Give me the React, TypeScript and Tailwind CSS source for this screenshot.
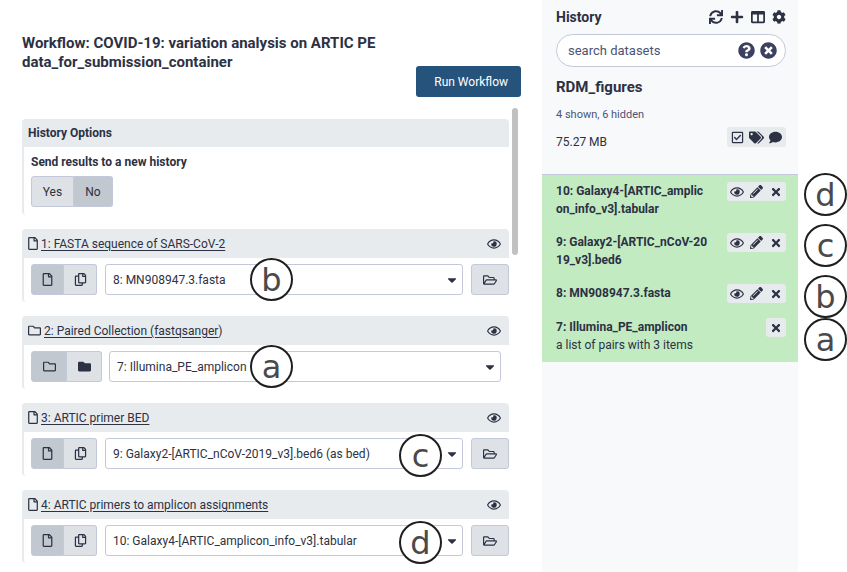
import type { ReactNode } from "react";
import {
  FaCaretDown,
  FaCog,
  FaColumns,
  FaComment,
  FaFolder,
  FaPencilAlt,
  FaPlus,
  FaQuestionCircle,
  FaRegCheckSquare,
  FaRegCopy,
  FaRegEye,
  FaRegFile,
  FaRegFolder,
  FaRegFolderOpen,
  FaSync,
  FaTags,
  FaTimes,
  FaTimesCircle,
} from "react-icons/fa";

function Marker({ letter, className = "" }: { letter: string; className?: string }) {
  return (
    <span
      className={`flex size-[43px] items-center justify-center rounded-full border-2 border-[#1f1f1f] bg-white [font-family:'DejaVu_Sans',sans-serif] text-[32px] leading-none text-[#4a4a4a] ${className}`}
    >
      {letter}
    </span>
  );
}

function Toggle({ active, label, children, className }: { active?: boolean; label: string; children: ReactNode; className: string }) {
  return (
    <button
      type="button"
      aria-label={label}
      aria-pressed={!!active}
      className={`flex h-[31px] items-center justify-center border border-[#c3c8da] first:rounded-l-[3px] last:rounded-r-[3px] last:border-l-0 ${
        active ? "bg-[#c1c8d0]" : "bg-[#dee2e6]"
      } ${className}`}
    >
      {children}
    </button>
  );
}

type Step = {
  id: string;
  title: string;
  tail?: string;
  value: string;
  collection?: boolean;
  marker: string;
  markerClass: string;
};

const steps: Step[] = [
  { id: "s1", title: "1: FASTA sequence of SARS-CoV-2", value: "8: MN908947.3.fasta", marker: "b", markerClass: "left-[145px] -top-1.5" },
  { id: "s2", title: "2: Paired Collection (fastqsanger", tail: ")", value: "7: Illumina_PE_amplicon", collection: true, marker: "a", markerClass: "left-[141px] -top-1.5" },
  { id: "s3", title: "3: ARTIC primer BED", value: "9: Galaxy2-[ARTIC_nCoV-2019_v3].bed6 (as bed)", marker: "c", markerClass: "right-[21px] -top-1" },
  { id: "s4", title: "4: ARTIC primers to amplicon assignments", value: "10: Galaxy4-[ARTIC_amplicon_info_v3].tabular", marker: "d", markerClass: "right-[21px] -top-1" },
];

function StepCard({ step }: { step: Step }) {
  const c = step.collection;
  return (
    <section className="rounded-[4px] border-l-2 border-[#e7ebee]">
      <header className="-ml-0.5 flex h-[29px] items-center justify-between rounded-t-[4px] bg-[#e7ebee] pr-2 pl-1.5">
        <div className="flex items-center gap-[3px]">
          {c ? <FaRegFolder size={13} /> : <FaRegFile className="w-2.5" size={13} />}
          <label htmlFor={step.id}>
            <span className="underline underline-offset-2">{step.title}</span>
            {step.tail}
          </label>
        </div>
        <button type="button" aria-label="Show in preview">
          <FaRegEye size={14} />
        </button>
      </header>
      <div className={`flex pt-1.5 pb-[7px] pl-[7px] ${c ? "gap-[7px] pr-2" : "gap-2"}`}>
        <div className="flex">
          <Toggle active label="Single" className={c ? "w-9" : "w-[33px]"}>
            {c ? <FaRegFolder size={13} /> : <FaRegFile size={13} />}
          </Toggle>
          <Toggle label="Multiple" className={c ? "w-[35px]" : "w-[33px]"}>
            {c ? <FaFolder size={13} /> : <FaRegCopy size={13} />}
          </Toggle>
        </div>
        <div className="relative min-w-0 flex-1">
          <select id={step.id} className="h-[31px] w-full appearance-none rounded-[3px] border border-[#c3c8da] bg-white pr-6 pl-[7px]">
            <option>{step.value}</option>
          </select>
          <FaCaretDown size={14} className="pointer-events-none absolute top-[9px] right-1" />
          <Marker letter={step.marker} className={`absolute ${step.markerClass}`} />
        </div>
        {!c && (
          <button type="button" aria-label="Browse datasets" className="flex h-[31px] w-[38px] items-center justify-center rounded-[3px] border border-[#c3c8da] bg-[#dee2e6]">
            <FaRegFolderOpen size={14} />
          </button>
        )}
      </div>
    </section>
  );
}

const datasets = [
  { name: "10: Galaxy4-[ARTIC_amplicon_info_v3].tabular", full: true },
  { name: "9: Galaxy2-[ARTIC_nCoV-2019_v3].bed6", full: true },
  { name: "8: MN908947.3.fasta", full: true },
  { name: "7: Illumina_PE_amplicon", note: "a list of pairs with 3 items", full: false },
];

export default function App() {
  return (
    <div className="flex h-screen overflow-hidden bg-white [font-family:Roboto,sans-serif] text-xs leading-[18px] text-[#2c3143]">
      <main className="flex min-w-0 flex-1 flex-col pr-[21px] pl-[22px]">
        <h1 className="mt-[34px] pr-[120px] text-[15px] leading-[19px] font-bold">
          Workflow: COVID-19: variation analysis on ARTIC PE data_for_submission_container
        </h1>
        <button type="button" className="-mt-1.5 h-[31px] shrink-0 self-end rounded-[3px] bg-[#25537b] pr-[13px] pl-[18px] text-white">
          Run Workflow
        </button>
        <div className="mt-[11px] flex min-h-0 flex-1 gap-[3px] overflow-hidden pr-[3px]">
          <div className="flex min-w-0 flex-1 flex-col gap-3.5 pt-[11px]">
            <section className="rounded-[4px] border-l-2 border-[#e7ebee]">
              <h2 className="-ml-0.5 flex h-7 items-center rounded-t-[4px] bg-[#e7ebee] pl-1.5 font-bold">History Options</h2>
              <div className="pt-1.5 pb-2 pl-[7px]">
                <p className="font-bold">Send results to a new history</p>
                <div className="mt-[5px] flex">
                  <Toggle label="Yes" className="w-[43px]">Yes</Toggle>
                  <Toggle active label="No" className="w-[39px]">No</Toggle>
                </div>
              </div>
            </section>
            {steps.map((s) => (
              <StepCard key={s.id} step={s} />
            ))}
          </div>
          <div className="h-[147px] w-1.5 rounded-full bg-[#c1c1c1]" />
        </div>
      </main>

      <aside className="w-64 shrink-0 bg-[#f8f9fb]">
        <div className="h-[174px] px-3.5 pt-2">
          <div className="-mr-0.5 flex items-center justify-between">
            <h2 className="text-sm leading-[18px] font-bold">History</h2>
            <div className="flex items-center gap-[7px]">
              <button type="button" aria-label="Refresh"><FaSync size={14} /></button>
              <button type="button" aria-label="New history"><FaPlus size={14} /></button>
              <button type="button" aria-label="All histories"><FaColumns size={14} /></button>
              <button type="button" aria-label="Options"><FaCog size={14} /></button>
            </div>
          </div>
          <div className="-mr-0.5 mt-2 flex h-[33px] items-center gap-[5px] rounded-full border border-[#c3c8da] bg-white pr-2 pl-[11px] text-[#3b415e]">
            <input aria-label="search datasets" placeholder="search datasets" className="min-w-0 flex-1 bg-transparent text-[13px] outline-none placeholder:text-[#4c5374]" />
            <button type="button" aria-label="Help"><FaQuestionCircle size={17} /></button>
            <button type="button" aria-label="Clear"><FaTimesCircle size={17} /></button>
          </div>
          <h3 className="mt-[11px] text-[15px] leading-[18px] font-bold">RDM_figures</h3>
          <p className="mt-[10px] text-[11px] text-[#4c5374]">4 shown, 6 hidden</p>
          <div className="mt-[3px] -mr-0.5 flex items-start justify-between">
            <span className="mt-1.5">75.27 MB</span>
            <div className="flex h-5 items-center gap-[5px] rounded-[3px] bg-[#e7ebee] px-1">
              <button type="button" aria-label="Select"><FaRegCheckSquare size={13} /></button>
              <button type="button" aria-label="Tags"><FaTags size={15} /></button>
              <button type="button" aria-label="Annotate"><FaComment size={13} /></button>
            </div>
          </div>
        </div>
        <ul className="border-t border-[#c3c8da] bg-[#c2ebc2]">
          {datasets.map((d) => (
            <li key={d.name} className="flex items-start justify-between pt-[7px] pr-3 pb-2 pl-3.5">
              <div className="w-[152px]">
                <p className="font-bold break-all">{d.name}</p>
                {d.note && <p>{d.note}</p>}
              </div>
              <div className="flex h-[19px] items-center gap-1.5 rounded-[3px] bg-[#e7ebee] px-[3px]">
                {d.full && (
                  <>
                    <button type="button" aria-label="View"><FaRegEye size={14} /></button>
                    <button type="button" aria-label="Edit"><FaPencilAlt size={13} /></button>
                  </>
                )}
                <button type="button" aria-label="Delete" className="px-px"><FaTimes size={12} /></button>
              </div>
            </li>
          ))}
        </ul>
      </aside>

      <div className="flex w-[49px] shrink-0 flex-col items-center pt-[173px] pl-1.5">
        <Marker letter="d" />
        <Marker letter="c" className="mt-2" />
        <Marker letter="b" className="mt-2" />
        <Marker letter="a" />
      </div>
    </div>
  );
}
